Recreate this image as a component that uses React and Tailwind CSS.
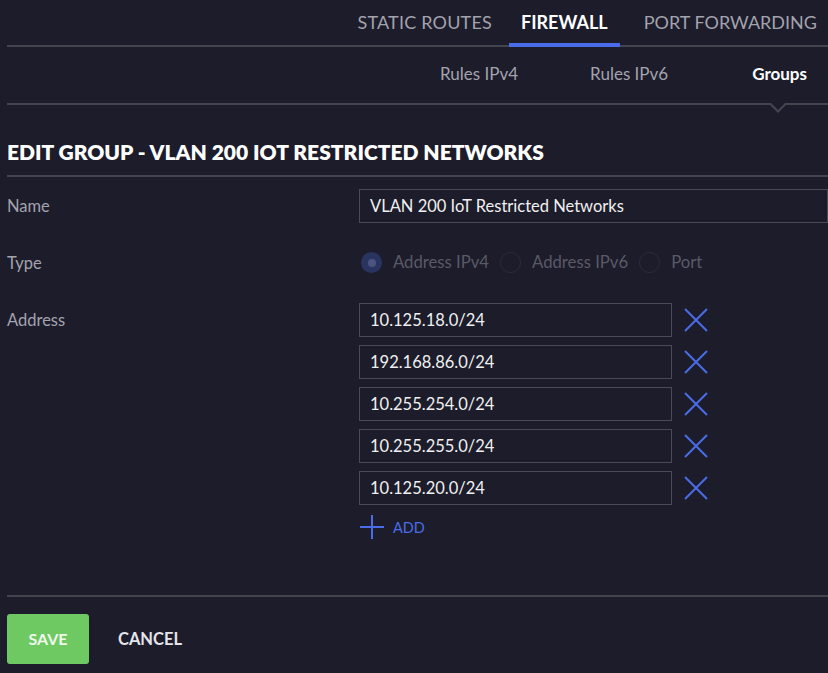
import { useState } from "react";

const addresses = ["10.125.18.0/24", "192.168.86.0/24", "10.255.254.0/24", "10.255.255.0/24", "10.125.20.0/24"];

const XIcon = () => (
  <svg width="24" height="24" viewBox="0 0 24 24" fill="none">
    <path d="M1 1L23 23M23 1L1 23" stroke="#4a6ce8" strokeWidth="2" />
  </svg>
);

const PlusIcon = () => (
  <svg width="24" height="24" viewBox="0 0 24 24" fill="none">
    <path d="M12 0V24M0 12H24" stroke="#4a6ce8" strokeWidth="2" />
  </svg>
);

const Radio = ({ checked, label }) => (
  <label className="flex items-center gap-[11px] text-[16.7px] text-[#5a5a66]">
    <span className={`flex h-[21px] w-[21px] items-center justify-center rounded-full ${checked ? "bg-[#2a3460]" : "border border-[#2c2c3a]"}`}>
      {checked ? <span className="h-[8px] w-[8px] rounded-full bg-[#4b5580]" /> : null}
    </span>
    {label}
  </label>
);

export default function App() {
  const [list] = useState(addresses);

  return (
    <div className="h-[673px] w-[828px] overflow-hidden bg-[#1c1c2b] font-['Lato','Liberation_Sans',sans-serif] text-[#a3a3ae]">
      <nav className="ml-[7px] flex h-[47px] items-stretch justify-end border-b-2 border-[#44444f]">
        <span className="flex items-center px-[17px] text-[18px] tracking-[0.2px] text-[#a3a3ad]">STATIC ROUTES</span>
        <span className="relative flex items-center px-[12px] text-[18px] font-bold text-white">
          FIREWALL
          <span className="absolute -bottom-[2px] left-0 right-0 h-[4px] bg-[#4a6ce8]" />
        </span>
        <span className="flex items-center pl-[24px] pr-[11px] text-[18px] text-[#a3a3ad]">PORT FORWARDING</span>
      </nav>

      <div className="relative ml-[7px] flex h-[58px] items-center justify-end border-b-2 border-[#44444f] pb-[2px] text-[17px]">
        <span className="mr-[72px] text-[#a3a3ad]">Rules IPv4</span>
        <span className="mr-[84px] text-[#a3a3ad]">Rules IPv6</span>
        <span className="mr-[21px] font-bold text-white">Groups</span>
        <span className="absolute -bottom-[10px] right-[40px] h-0 w-0 border-x-[10px] border-t-[10px] border-x-transparent border-t-[#44444f]" />
        <span className="absolute -bottom-[7px] right-[42px] h-0 w-0 border-x-[8px] border-t-[8px] border-x-transparent border-t-[#1c1c2b]" />
      </div>

      <h1 className="ml-[7px] mt-[31px] text-[21px] font-extrabold leading-[31px] tracking-[0px] text-white">EDIT GROUP - VLAN 200 IOT RESTRICTED NETWORKS</h1>
      <div className="ml-[7px] mt-[8px] border-b-2 border-[#44444f]" />

      <div className="ml-[7px] mt-[12px] grid grid-cols-[352px_1fr] gap-y-[23px]">
        <span className="flex h-[34px] items-center text-[16.5px]">Name</span>
        <div className="flex h-[34px] items-center border border-[#4a4a55] px-[10px] text-[16.5px] text-[#f0f0f0]">VLAN 200 IoT Restricted Networks</div>

        <span className="flex h-[34px] items-center text-[16.5px]">Type</span>
        <div className="flex h-[34px] items-center gap-[11px] pl-[2px]">
          <Radio checked label="Address IPv4" />
          <Radio label="Address IPv6" />
          <Radio label="Port" />
        </div>

        <span className="text-[16.5px] leading-[34px]">Address</span>
        <div className="flex flex-col gap-[8px]">
          {list.map((address) => (
            <div key={address} className="flex items-center gap-[12px]">
              <div className="flex h-[34px] w-[313px] items-center border border-[#4a4a55] px-[10px] text-[16.5px] text-[#f0f0f0]">{address}</div>
              <XIcon />
            </div>
          ))}
          <button type="button" className="mt-[2px] flex items-center gap-[9px] pl-[1px] text-[14.5px] text-[#4a6ce8]">
            <PlusIcon />
            <span className="mt-[2px]">ADD</span>
          </button>
        </div>
      </div>

      <div className="ml-[7px] mt-[56px] border-b-2 border-[#44444f]" />

      <div className="ml-[7px] mt-[17px] flex items-center gap-[29px]">
        <button type="button" className="h-[50px] w-[82px] rounded-[3px] bg-[#6fc962] text-[16px] font-bold text-[#eef8ec]">SAVE</button>
        <button type="button" className="text-[16.5px] font-bold text-[#e4e4ea]">CANCEL</button>
      </div>
    </div>
  );
}
